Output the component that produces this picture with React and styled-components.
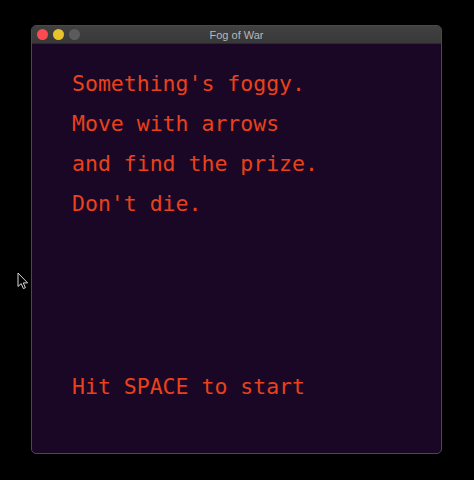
import styled, { createGlobalStyle } from 'styled-components';

const GlobalStyle = createGlobalStyle`
  html, body {
    margin: 0;
    padding: 0;
    background: #000;
  }
  body {
    width: 474px;
    height: 480px;
    overflow: hidden;
    font-family: "Liberation Sans", sans-serif;
  }
`;

const lines = ["Something's foggy.", 'Move with arrows', 'and find the prize.', "Don't die."];

const App = () => {
  return (
    <>
      <GlobalStyle />
      <Page>
        <Cursor viewBox="0 0 12 18" width="12" height="18">
          <path
            d="M1 1 L1 14.5 L4.2 11.6 L6.4 16.6 L8.4 15.7 L6.3 10.9 L10.6 10.9 Z"
            fill="#000"
            stroke="#d8d8d8"
            strokeWidth="1"
            strokeLinejoin="round"
          />
        </Cursor>
        <Window>
          <TitleBar>
            <Lights>
              <Light color="#fc4a50" />
              <Light color="#e8c32b" />
              <Light color="#5b5b5b" />
            </Lights>
            <Title>Fog of War</Title>
          </TitleBar>
          <Screen>
            <Intro>
              {lines.map(line => (
                <Line key={line}>{line}</Line>
              ))}
            </Intro>
            <Line>Hit SPACE to start</Line>
          </Screen>
        </Window>
      </Page>
    </>
  );
};

export default App;

const Page = styled.div`
  position: relative;
  width: 474px;
  height: 480px;
  padding: 25px 0 0 31px;
  box-sizing: border-box;
`;

const Cursor = styled.svg`
  position: absolute;
  left: 17px;
  top: 272px;
`;

const Window = styled.div`
  display: flex;
  flex-direction: column;

  width: 411px;
  height: 429px;

  border-radius: 5px;
  border: 1px solid #4a4a4a;
  box-sizing: border-box;
  overflow: hidden;
  background: #1a0625;
`;

const TitleBar = styled.div`
  position: relative;
  display: flex;
  align-items: center;
  justify-content: center;

  height: 17px;
  flex-shrink: 0;

  background: linear-gradient(#414141, #383838);
  border-bottom: 1px solid #2a2a2a;
`;

const Lights = styled.div`
  position: absolute;
  left: 5px;
  top: 3px;
  display: flex;
  gap: 5px;
`;

const Light = styled.span`
  width: 11px;
  height: 11px;
  border-radius: 50%;
  background: ${({ color }) => color};
`;

const Title = styled.span`
  color: #b8b8b8;
  font-size: 11px;
  font-family: "Liberation Sans", Arial, sans-serif;
`;

const Screen = styled.div`
  display: flex;
  flex-direction: column;
  justify-content: space-between;
  flex: 1;

  padding: 20px 0 46px 40px;
`;

const Intro = styled.div`
  display: flex;
  flex-direction: column;
`;

const Line = styled.div`
  height: 40px;
  line-height: 40px;
  color: #e9411b;
  font-family: "DejaVu Sans Mono", monospace;
  font-size: 21.5px;
  white-space: pre;
`;
